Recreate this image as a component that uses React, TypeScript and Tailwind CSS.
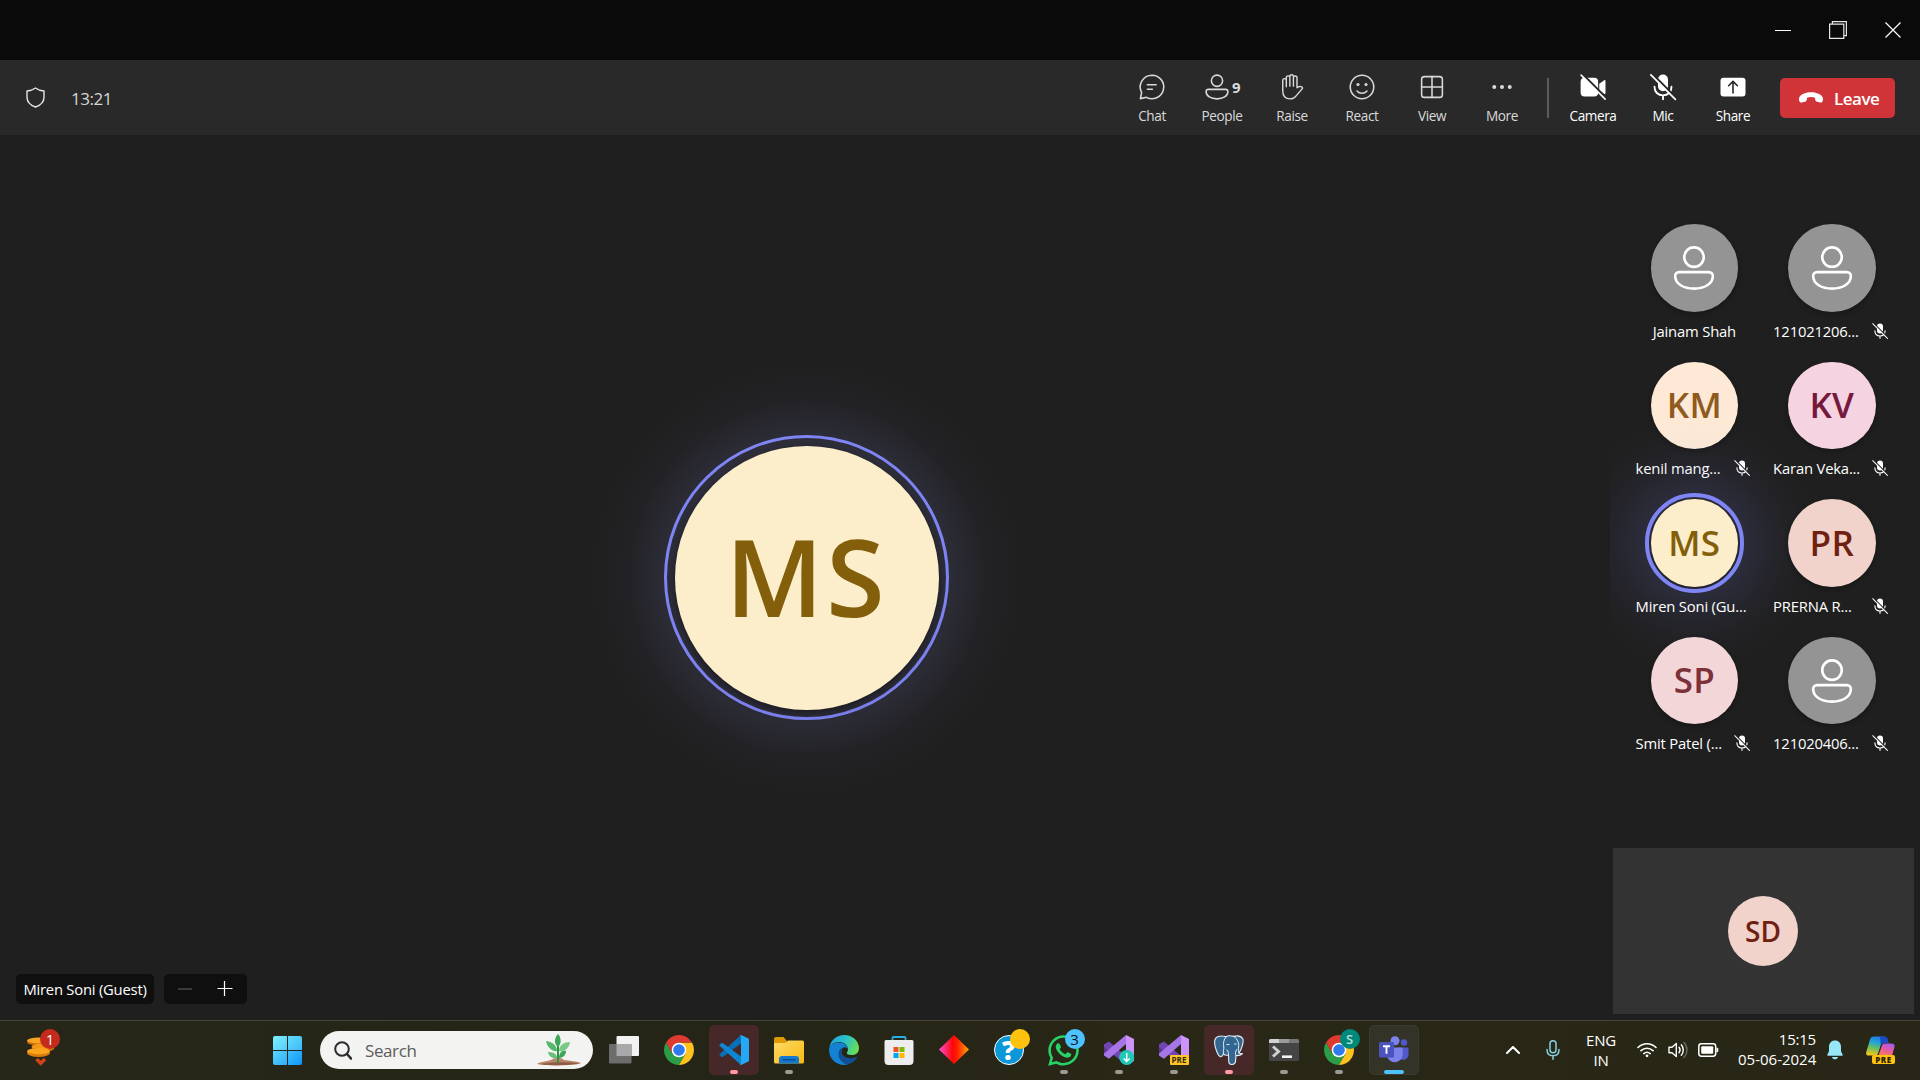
import type { ReactNode } from "react";
import { FaWhatsapp } from "react-icons/fa";

/* ---------- shared icons ---------- */

function Line({ size = 30, stroke = 1.25, children }: { size?: number; stroke?: number; children: ReactNode }) {
  return (
    <svg width={size} height={size} viewBox="0 0 24 24" fill="none" stroke="currentColor" strokeWidth={stroke} strokeLinecap="round" strokeLinejoin="round" className="shrink-0">
      {children}
    </svg>
  );
}

function Person({ size = 30, stroke = 1.25 }: { size?: number; stroke?: number }) {
  return (
    <Line size={size} stroke={stroke}>
      <circle cx="12" cy="7" r="4.5" />
      <path d="M5.1 13.9h13.8a1.8 1.8 0 0 1 1.8 1.8c0 3.6-3.9 5.8-8.7 5.8s-8.7-2.2-8.7-5.8a1.8 1.8 0 0 1 1.8-1.8Z" />
    </Line>
  );
}

function MicOff({ size, bg }: { size: number; bg: string }) {
  return (
    <svg width={size} height={size} viewBox="0 0 24 24" fill="none" strokeLinecap="round" className="shrink-0">
      <rect x="8" y="2" width="8" height="13.4" rx="4" fill="currentColor" />
      <path d="M5.2 11.8c0 4.2 2.8 6.9 6.8 6.9s6.8-2.7 6.8-6.9M12 18.7v3.100" stroke="currentColor" strokeWidth="1.5" />
      <path d="M3.4 1.500 23.100 21.200" stroke={bg} strokeWidth="1.7" />
      <path d="M2.3 2.3 21.9 21.9" stroke="currentColor" strokeWidth="1.4" />
    </svg>
  );
}

/* ---------- meeting toolbar ---------- */

function Tool({ label, bright, children }: { label: string; bright?: boolean; children: ReactNode }) {
  return (
    <div className={`flex w-[70px] flex-col items-center pt-[12px] ${bright ? "text-white" : "text-[#d9d9d9]"}`}>
      <div className="flex h-[30px] items-center justify-center">{children}</div>
      <span className="mt-[4px] text-[13.600px] leading-5 tracking-[-0.400px]">{label}</span>
    </div>
  );
}

function Toolbar() {
  return (
    <div className="flex h-[75px] bg-[#292929]">
      <div className="flex items-center pl-[23px]">
        <svg width="25" height="25" viewBox="0 0 20 20" fill="none" stroke="#e8e8e8" strokeWidth="1.1" strokeLinejoin="round">
          <path d="M10 2.4c2 1.5 4.300 2.200 6.800 2.400v4.700c0 3.900-2.300 6.500-6.800 8.100-4.500-1.600-6.800-4.200-6.800-8.100V4.800C5.700 4.600 8 3.900 10 2.400Z" />
        </svg>
        <span className="ml-[23px] mt-[2px] text-[17px] tracking-[-0.500px] text-[#d6d6d6]">13:21</span>
      </div>
      <div className="ml-auto flex">
        <Tool label="Chat">
          <Line>
            <path d="M12 2.6a9.400 9.400 0 1 1-4.500 17.660L2.700 21.300l1-4.900A9.400 9.400 0 0 1 12 2.600Z" />
            <path d="M8.300 10.200h7M8.300 13.800h4" />
          </Line>
        </Tool>
        <Tool label="People">
          <div className="flex items-center pr-px">
            <Person />
            <span className="w-[9px] text-[15px] font-bold leading-5">9</span>
          </div>
        </Tool>
        <Tool label="Raise">
          <Line stroke={1.15}>
            <path d="M4.600 15V6.700a1.400 1.400 0 0 1 2.850 0V4.500a1.420 1.420 0 0 1 2.850 0V3.600a1.420 1.420 0 0 1 2.850 0v1a1.420 1.420 0 0 1 2.850 0v8c.9-1 2-1.300 3.300-.9 1 .3 1.500 1.100.8 1.800l-5 5.800c-1 1.500-2.300 2.200-4.600 2.200-4 0-5.900-2.300-5.900-6.500ZM7.450 6.700v5.100M10.300 4.500v6.800M13.150 4.600v6.700" />
          </Line>
        </Tool>
        <Tool label="React">
          <Line>
            <circle cx="12" cy="12" r="9.400" />
            <circle cx="8.800" cy="10" r="1.250" fill="currentColor" stroke="none" />
            <circle cx="15.200" cy="10" r="1.250" fill="currentColor" stroke="none" />
            <path d="M8 15.200c2.100 2.400 5.900 2.400 8 0" />
          </Line>
        </Tool>
        <Tool label="View">
          <Line>
            <rect x="3.700" y="3.700" width="16.600" height="16.600" rx="2.200" />
            <path d="M12 3.700v16.600M3.700 12h16.600" />
          </Line>
        </Tool>
        <Tool label="More">
          <svg width="30" height="30" viewBox="0 0 24 24" fill="currentColor">
            <circle cx="5.800" cy="12" r="1.600" />
            <circle cx="12" cy="12" r="1.600" />
            <circle cx="18.200" cy="12" r="1.600" />
          </svg>
        </Tool>
      </div>
      <div className="ml-[10px] mr-[9px] mt-[18px] h-10 w-[2px] bg-[#5c5c5c]" />
      <Tool label="Camera" bright>
        <svg width="30" height="30" viewBox="0 0 24 24" fill="currentColor">
          <rect x="2.100" y="4.500" width="14" height="15" rx="3.200" />
          <path d="M17 9.300 21 6.500c.5-.3 1 0 1 .5v10c0 .6-.5.900-1 .5l-4-2.800Z" />
          <path d="M3.300 1.400 23 21.100" stroke="#292929" strokeWidth="1.700" />
          <path d="M2.500 2.500 21.700 21.700" stroke="currentColor" strokeWidth="1.300" strokeLinecap="round" />
        </svg>
      </Tool>
      <Tool label="Mic" bright>
        <MicOff size={30} bg="#292929" />
      </Tool>
      <Tool label="Share" bright>
        <svg width="30" height="30" viewBox="0 0 24 24" fill="none">
          <rect x="2" y="4.500" width="20" height="15" rx="2.400" fill="currentColor" />
          <path d="M12 16.800V7.800M8.500 11 12 7.500l3.500 3.500" stroke="#292929" strokeWidth="1.300" strokeLinecap="round" strokeLinejoin="round" />
        </svg>
      </Tool>
      <button className="ml-[12px] mr-[25px] mt-[18px] flex h-10 w-[115px] items-center rounded-[5px] bg-[#d13438] pl-[19px] text-white">
        <svg width="24" height="12" viewBox="0 0 24 12" fill="currentColor">
          <path d="M12 .3c5 0 9.300 1.700 11.200 4.300.8 1.200 1 2.700.6 4.200-.3 1.300-1.400 2-2.600 1.700l-3.100-.7c-1-.2-1.700-1-1.900-2l-.3-2.100C14.700 5.200 13.400 5 12 5s-2.700.2-3.900.7l-.3 2.100c-.2 1-.9 1.800-1.900 2l-3.100.7c-1.200.3-2.300-.4-2.600-1.700-.4-1.500-.2-3 .6-4.200C2.700 2 7 .3 12 .3Z" />
        </svg>
        <span className="ml-[11px] mt-px text-[17px] font-semibold tracking-[-0.500px]">Leave</span>
      </button>
    </div>
  );
}

/* ---------- participants ---------- */

type Participant = { name: string; initials?: string; bg: string; fg: string; muted?: boolean; speaking?: boolean };

const participants: Participant[] = [
  { name: "Jainam Shah", bg: "bg-[#949494]", fg: "text-white" },
  { name: "121021206...", bg: "bg-[#949494]", fg: "text-white", muted: true },
  { name: "kenil mang...", initials: "KM", bg: "bg-[#fde9d5]", fg: "text-[#8f5a20]", muted: true },
  { name: "Karan Veka...", initials: "KV", bg: "bg-[#f5d3e0]", fg: "text-[#77193d]", muted: true },
  { name: "Miren Soni (Gu...", initials: "MS", bg: "bg-[#fdeecb]", fg: "text-[#835f0b]", speaking: true },
  { name: "PRERNA R...", initials: "PR", bg: "bg-[#f1d3cc]", fg: "text-[#6e2110]", muted: true },
  { name: "Smit Patel (...", initials: "SP", bg: "bg-[#f3d6d8]", fg: "text-[#7c3038]", muted: true },
  { name: "121020406...", bg: "bg-[#949494]", fg: "text-white", muted: true },
];

function Tile({ p }: { p: Participant }) {
  return (
    <div className="relative h-[137.500px] w-[137.500px]">
      {p.speaking && (
        <div className="pointer-events-none absolute -left-[16px] -top-[83px] h-[254px] w-[211px] overflow-hidden">
          <div className="h-[254px] w-[254px] -translate-x-[43px] bg-[radial-gradient(circle_closest-side,rgba(127,133,245,0.16)_0%,rgba(127,133,245,0.13)_40%,rgba(127,133,245,0.05)_65%,rgba(127,133,245,0.01)_88%,rgba(127,133,245,0)_100%)]" />
        </div>
      )}
      <div className={`relative mx-auto flex h-[87.500px] w-[87.500px] items-center justify-center rounded-full shadow-[0_2px_5px_rgba(0,0,0,0.3)] ${p.bg} ${p.fg}`}>
        {p.initials ? (
          <span className="-mt-[2px] text-[35px] font-semibold leading-none tracking-[0.300px]">{p.initials}</span>
        ) : (
          <Person size={52} stroke={1.200} />
        )}
        {p.speaking && <div className="absolute -inset-[6px] rounded-full border-4 border-[#7f85f5]" />}
      </div>
      <div className={`relative mt-[8px] flex h-[22px] items-center pl-[10px] pr-[12px] text-white ${p.muted || p.speaking ? "justify-between" : "justify-center pl-[12px]"}`}>
        <span className="whitespace-nowrap text-[14.800px] leading-[22px] tracking-[-0.180px]">{p.name}</span>
        {p.muted && <MicOff size={18} bg="#1f1f1f" />}
      </div>
    </div>
  );
}

function Stage() {
  return (
    <div className="flex h-[885px] bg-[#1f1f1f]">
      <div className="relative flex w-[1613px] items-center justify-center">
        <div className="flex h-[430px] w-[430px] items-center justify-center rounded-full bg-[radial-gradient(circle_closest-side,#343444_0%,#31313f_60%,#2a2a33_70%,#232327_82%,#1f1f1f_100%)]">
          <div className="flex h-[285px] w-[285px] items-center justify-center rounded-full border-[3.500px] border-[#7f85f5]">
            <div className="flex h-[264px] w-[264px] items-center justify-center rounded-full bg-[#fdeecb] shadow-[0_3px_8px_rgba(0,0,0,0.5)]">
              <span className="-mt-[4px] text-[106px] font-semibold leading-none tracking-[3px] text-[#835f0b]">MS</span>
            </div>
          </div>
        </div>
        <div className="absolute bottom-[16px] left-[16px] flex h-[30px] gap-[10px]">
          <div className="flex w-[138px] items-center justify-center rounded-[5px] bg-[#0f0f0f] pt-px">
            <span className="whitespace-nowrap text-[14.800px] tracking-[-0.220px] text-white">Miren Soni (Guest)</span>
          </div>
          <div className="flex w-[83px] items-center rounded-[5px] bg-[#0f0f0f] pl-[14px]">
            <div className="h-[2px] w-[14px] bg-[#3a3a3a]" />
            <svg width="16" height="16" viewBox="0 0 16 16" stroke="white" strokeWidth="1.200" className="ml-[25px]">
              <path d="M.5 7.500h15M7.500 0v15" />
            </svg>
          </div>
        </div>
      </div>
      <div className="flex flex-1 flex-col justify-between pb-[6px] pt-[89.400px]">
        <div className="ml-[12.600px] grid w-[275px] grid-cols-2">
          {participants.map((p) => (
            <Tile key={p.name} p={p} />
          ))}
        </div>
        <div className="flex h-[166px] w-[301px] items-center justify-center bg-[#333] pr-px">
          <div className="flex h-[70px] w-[70px] items-center justify-center rounded-full bg-[#f1d3cc]">
            <span className="-mt-px text-[28px] font-semibold leading-none text-[#6e2110]">SD</span>
          </div>
        </div>
      </div>
    </div>
  );
}

/* ---------- taskbar ---------- */

function App30({ children }: { children: ReactNode }) {
  return (
    <svg width="30" height="30" viewBox="0 0 30 30" className="overflow-visible">
      {children}
    </svg>
  );
}

function Slot({ state, children }: { state?: "open" | "alert" | "active"; children: ReactNode }) {
  return (
    <div className="flex w-[55px] justify-center">
      <div
        className={`relative flex h-[50px] w-[50px] items-center justify-center rounded-[5px] ${
          state === "alert" ? "bg-[#472829]" : state === "active" ? "border border-[#3a3a2e] bg-[#333328]" : ""
        }`}
      >
        {children}
        {state === "open" && <div className="absolute bottom-px h-1 w-2 rounded-full bg-[#9b9b93]" />}
        {state === "alert" && <div className="absolute bottom-px h-1 w-2 rounded-full bg-[#ff99a4]" />}
        {state === "active" && <div className="absolute bottom-0 h-1 w-5 rounded-full bg-[#4cc2ff]" />}
      </div>
    </div>
  );
}

function Badge({ tone, children }: { tone: string; children?: ReactNode }) {
  return <div className={`absolute left-[26px] top-[4px] flex h-5 w-5 items-center justify-center rounded-full leading-none ${tone}`}>{children}</div>;
}

function Chrome() {
  return (
    <App30>
      <path d="M2.010 7.500A15 15 0 0 0 15 30l6.500-11.250h-13Z" fill="#2a9d48" />
      <path d="M27.990 7.500A15 15 0 0 1 15 30l6.500-11.250L15 7.500Z" fill="#fcc31e" />
      <path d="M2.010 7.500A15 15 0 0 1 27.990 7.500H15L8.500 18.750Z" fill="#df3a2f" />
      <circle cx="15" cy="15" r="7.300" fill="#fff" />
      <circle cx="15" cy="15" r="5.800" fill="#2f7bee" />
    </App30>
  );
}

function VisualStudio({ children }: { children?: ReactNode }) {
  return (
    <App30>
      <path d="M0 9.500 5 6.500v17.200L0 20.500Z" fill="#5b378f" />
      <path d="M0 9.500 5 6.500 22 21v9L0 12Z" fill="#7146b4" />
      <path d="M0 20.500 5 23.700 22 9V0L0 18.500Z" fill="#a675e6" />
      <path d="M22 0 30 4v22l-8 4Z" fill="#cc93fb" />
      {children}
    </App30>
  );
}

function Elephant() {
  return (
    <App30>
      <g fill="#336791" stroke="#e6edf2" strokeWidth="1.100" strokeLinecap="round" strokeLinejoin="round">
        <path d="M8 1C2 .8.300 4 .6 8c.3 5 3.400 13.200 5.900 13.700 1.500.3 2.500-2.200 3-2.900 1 1.200 3 1.700 5 1.200l.3 7c.2 3.400 6.200 3.400 6.700-.5l.5-6c2.500.3 5-.5 6.500-1.700-1.500-.3-3-.2-3.500-.8 3-4.500 5-12 3.800-14.200C27 1 23 .6 20 1.400 16.500.4 13.500.6 12 1.800 10.500 1.200 9.500 1 8 1Z" />
        <path d="M12 1.800C9.500 4.500 9 9 9.800 12c.2 2.500-1 4-.3 6.800M20 1.400c3.500 2.600 5.500 7.600 4.500 10.600-.3 2.500-.2 4.500.5 6M14.500 20c.3-2-.2-3.500-1.500-5M22 20.500c-1-2-.8-4 .8-6" fill="none" strokeWidth="1" />
        <path d="M13 9.500h2M20.700 9h1.500" strokeWidth="1.200" />
      </g>
    </App30>
  );
}

function Taskbar() {
  return (
    <div className="flex h-[60px] border-t border-[#45453a] bg-[linear-gradient(90deg,#262718,#242517_35%,#292716_60%,#282717)] text-white">
      {/* widgets */}
      <div className="flex w-[259px] items-center pb-[5px] pl-[26px]">
        <div className="relative h-[38px] w-[36px]">
          <svg width="30" height="38" viewBox="0 0 30 38">
            <ellipse cx="12.500" cy="13" rx="11.500" ry="3.600" fill="#c96a07" />
            <ellipse cx="12.500" cy="11.500" rx="11.500" ry="3" fill="#f8a321" />
            <ellipse cx="17" cy="19" rx="11.500" ry="3.800" fill="#cf7409" />
            <ellipse cx="17" cy="17.500" rx="11.500" ry="3" fill="#f39717" />
            <ellipse cx="12.500" cy="24" rx="11.500" ry="4" fill="#d97c0a" />
            <ellipse cx="12.500" cy="22.200" rx="11.500" ry="3" fill="#fba51f" />
            <path d="m10.500 30 4.200 4.200L19 30" fill="none" stroke="#cf4416" strokeWidth="3.600" />
          </svg>
          <div className="absolute left-[14px] top-0 flex h-5 w-5 items-center justify-center rounded-full bg-[#c42b1c] text-[14px]">1</div>
        </div>
      </div>
      {/* start */}
      <div className="flex w-[56px] items-center justify-center">
        <div className="grid h-[29px] w-[29px] grid-cols-2 gap-px overflow-hidden rounded-[2px]">
          <div className="bg-[linear-gradient(135deg,#7df0fd,#56cdfb)]" />
          <div className="bg-[linear-gradient(135deg,#63dcfc,#3db9fb)]" />
          <div className="bg-[linear-gradient(135deg,#5bd6fc,#2fabfa)]" />
          <div className="bg-[linear-gradient(135deg,#41bffb,#0d95fb)]" />
        </div>
      </div>
      {/* search */}
      <div className="ml-[5px] mr-[3px] mt-[10px] flex h-[38px] w-[273px] items-center rounded-full bg-[#f3f3f1] pl-[14px] pr-[10px]">
        <svg width="18" height="19" viewBox="0 0 18 19" fill="none" stroke="#2c2c30" strokeWidth="2" strokeLinecap="round">
          <circle cx="8" cy="8" r="6.800" />
          <path d="m13 13 4 4.500" strokeWidth="2.600" />
        </svg>
        <span className="ml-[13px] mt-px text-[17px] tracking-[-0.400px] text-[#5c5c5c]">Search</span>
        <svg width="46" height="34" viewBox="0 0 46 34" className="ml-auto">
          <path d="M0 31c4-3 9-2 14-4 5-3 9-3 13 0 6 1 12 1 17 3-2 3-40 3-44 1Z" fill="#b98468" />
          <path d="M4 31c10-2 20-2 38-1-6 2.500-34 3-38 1Z" fill="#8e5b44" />
          <path d="M21 30V12" stroke="#2d9448" strokeWidth="2" />
          <path d="M21 14c-5-4-3-10 0-13 3 3 4 9 0 13Z" fill="#3ba858" />
          <path d="M20 18C15 19 10 14 9 8c7 1 11 5 11 10Z" fill="#56b86a" />
          <path d="M22 18c0-5 4-9 11-9-1 6-5 10-11 9Z" fill="#79c987" />
          <path d="M20 25c-4 1-8-1-9-6 5 0 9 2 9 6Z" fill="#67bf79" />
          <path d="M22 25c0-4 2-8 7-7 0 4-3 7-7 7Z" fill="#3da65a" />
        </svg>
      </div>
      {/* pinned and running apps */}
      <div className="flex items-center pb-px">
        <Slot>
          <App30>
            <rect x="7.500" y="1" width="22.500" height="20" rx="1" fill="#f2f2f2" />
            <rect x="0" y="9" width="22.500" height="19.500" rx="1" fill="#6d6d6d" />
            <rect x="7.500" y="9" width="15" height="12" fill="#a9a9a9" />
          </App30>
        </Slot>
        <Slot>
          <Chrome />
        </Slot>
        <Slot state="alert">
          <App30>
            <path d="M.5 19.200 22 0v8.500L4 21.800c-.6.400-1.200.4-1.700-.1L.6 20.200c-.3-.3-.3-.7-.1-1Z" fill="#0870b8" />
            <path d="M.5 10.800 22 30v-8.500L4 8.200c-.6-.4-1.200-.4-1.700.1L.6 9.800c-.3.3-.3.700-.1 1Z" fill="#0e86d4" />
            <path d="M22 0 29 3.200c.7.300 1 .8 1 1.500v20.600c0 .7-.3 1.200-1 1.500L22 30l-1.500-1c.9.5 1.500.3 1.500-.8V1.800c0-1-.6-1.300-1.500-.8Z" fill="#25a8f5" />
          </App30>
        </Slot>
        <Slot state="open">
          <App30>
            <path d="M0 4a2 2 0 0 1 2-2h7.500l3 3.500V9H0Z" fill="#dd9a05" />
            <path d="M0 8h11l3-2.500h14.500A1.500 1.500 0 0 1 30 7v20a1.500 1.500 0 0 1-1.500 1.500h-27A1.500 1.500 0 0 1 0 27Z" fill="url(#folder)" />
            <path d="M5 28.500V24a3 3 0 0 1 3-3h14a3 3 0 0 1 3 3v4.500Z" fill="#1279cf" />
            <path d="M9 24.800h12" stroke="#0a4d95" strokeWidth="1.400" strokeLinecap="round" />
            <defs>
              <linearGradient id="folder" x1="0" y1="0" x2="1" y2="1">
                <stop stopColor="#ffdb68" />
                <stop offset="1" stopColor="#f8b80f" />
              </linearGradient>
            </defs>
          </App30>
        </Slot>
        <Slot>
          <App30>
            <defs>
              <linearGradient id="edgeTop" x1="0" y1="0.300" x2="1" y2="0.600">
                <stop stopColor="#1ea0dd" />
                <stop offset="0.500" stopColor="#2bc3c8" />
                <stop offset="1" stopColor="#6ce050" />
              </linearGradient>
            </defs>
            <path d="M0 15C0 10 5 7.500 9.500 7.500c5.500 0 9.500 3.500 9.500 6.500-1-1.500-3-2-4.500-1.500-3.500 1.500-5.500 4.500-4.500 8.500 1.200 4.500 5 7.500 9 8.200-1.200.6-2.500.8-4 .8C7 30 0 23.500 0 15Z" fill="#1382d3" />
            <path d="M14.500 12.500C8.500 14.500 8.500 23.500 14 27.500c4.500 3.500 10.500.5 14-4.800.3-.8-.6-1-2-.3-6 2.300-13.200-.4-13.200-5.600 0-1.800.5-3.500 1.700-4.300Z" fill="#114f96" />
            <path d="M.2 13C1.500 5 8 0 15 0c9 0 15 6.500 15 13 0 4.500-3 7-7 7-3.500 0-5.500-1-5.200-2.300.3-1 1.400-1.700 1.200-4.200C18.700 9.500 14 6.800 9.500 6.900 5 7 1.500 9.500.2 13Z" fill="url(#edgeTop)" />
          </App30>
        </Slot>
        <Slot>
          <App30>
            <path d="M8.500 6V3A1 1 0 0 1 9.500 2h11A1 1 0 0 1 21.500 3v3" fill="none" stroke="#27ace6" strokeWidth="1.800" />
            <path d="M.5 6.500a1.500 1.500 0 0 1 1.500-1.500h26a1.500 1.500 0 0 1 1.500 1.500V26a4 4 0 0 1-4 4h-21a4 4 0 0 1-4-4Z" fill="#ededed" />
            <path d="M9.500 12h5v5h-5Z" fill="#f25022" />
            <path d="M15.500 12h5v5h-5Z" fill="#7fba00" />
            <path d="M9.500 18h5v5h-5Z" fill="#00a4ef" />
            <path d="M15.500 18h5v5h-5Z" fill="#ffb900" />
          </App30>
        </Slot>
        <Slot>
          <App30>
            <defs>
              <linearGradient id="gem">
                <stop stopColor="#ff4fd8" />
                <stop offset="0.450" stopColor="#fb0808" />
                <stop offset="0.600" stopColor="#ff1c00" />
                <stop offset="1" stopColor="#ffa800" />
              </linearGradient>
            </defs>
            <path d="m15 0 15 14.500L15 29 0 14.500Z" fill="url(#gem)" />
          </App30>
        </Slot>
        <Slot>
          <div className="flex h-[30px] w-[30px] items-center justify-center rounded-full border-[1.500px] border-white bg-[#0c97d8] text-[26px] font-extrabold leading-none">?</div>
          <Badge tone="bg-[#ffc20e]" />
        </Slot>
        <Slot state="open">
          <FaWhatsapp size={35} color="#25d366" />
          <Badge tone="bg-[#4cc2ff] text-[#111] text-[15px]">3</Badge>
        </Slot>
        <Slot state="open">
          <VisualStudio>
            <circle cx="22.700" cy="22.500" r="7.500" fill="#1fc8b4" />
            <path d="M22.700 18v8.500m-3-3 3 3 3-3" fill="none" stroke="#fff" strokeWidth="1.500" />
          </VisualStudio>
        </Slot>
        <Slot state="open">
          <VisualStudio />
          <div className="absolute left-[21px] top-[30px] flex h-[10px] w-[19px] items-center justify-center rounded-[1px] bg-[#ffc426] text-[8px] font-bold leading-none text-[#332b12]">PRE</div>
        </Slot>
        <Slot state="alert">
          <Elephant />
        </Slot>
        <Slot state="open">
          <App30>
            <rect x="0" y="4" width="30" height="22" rx="1.500" fill="#454545" />
            <path d="M0 8V5.500A1.500 1.500 0 0 1 1.500 4H10v4Z" fill="#d2d2d2" />
            <path d="M10 4h10v4H10Z" fill="#9b9b9b" />
            <path d="M20 4h8.500A1.500 1.500 0 0 1 30 5.500V8H20Z" fill="#777" />
            <path d="m4 11.500 5.500 5L4 21.500" fill="none" stroke="#d0d0d0" strokeWidth="3" />
            <path d="M13 21.700h10" stroke="#f2f2f2" strokeWidth="2.600" />
          </App30>
        </Slot>
        <Slot state="open">
          <Chrome />
          <Badge tone="bg-[#00897b] text-[#b9dfda] text-[13px] font-semibold">S</Badge>
        </Slot>
        <Slot state="active">
          <App30>
            <circle cx="25" cy="7.500" r="3.200" fill="#5059c9" />
            <path d="M20 12.500h8.500a1 1 0 0 1 1 1V20a5 5 0 0 1-7 4.500Z" fill="#5059c9" />
            <circle cx="16" cy="5.700" r="4.500" fill="#7b83eb" />
            <path d="M9 12.500h13.500a1.200 1.200 0 0 1 1.200 1.200V20a8 8 0 0 1-15.500 2Z" fill="#7b83eb" />
            <rect x="0" y="7" width="15" height="15.500" rx="1.300" fill="#4b53bc" />
            <path d="M4 11.200h7M7.500 11.200v7.600" stroke="#fff" strokeWidth="1.900" />
          </App30>
        </Slot>
      </div>
      {/* system tray */}
      <div className="ml-auto flex items-center pb-px text-[15px] leading-5">
        <svg width="14" height="8" viewBox="0 0 14 8" fill="none" stroke="white" strokeWidth="2" strokeLinecap="round" strokeLinejoin="round">
          <path d="m1 7 6-6 6 6" />
        </svg>
        <svg width="14" height="20" viewBox="0 0 14 20" fill="none" stroke="#86cfe0" strokeWidth="1.500" strokeLinecap="round" className="ml-[26px]">
          <rect x="4" y=".8" width="6" height="12" rx="3" />
          <path d="M1 9.500c0 4 2.500 6.300 6 6.300s6-2.300 6-6.300M7 16v3.300" />
        </svg>
        <div className="ml-[26px] w-[30px] text-center tracking-[-0.200px]">
          <div>ENG</div>
          <div>IN</div>
        </div>
        <svg width="20" height="16" viewBox="0 0 20 16" fill="none" stroke="white" strokeWidth="1.600" strokeLinecap="round" className="ml-[21px]">
          <path d="M1 5.500c5-5 13-5 18 0M4 8.700c3.500-3.300 8.500-3.300 12 0M6.800 11.600c2-1.700 4.400-1.700 6.400 0" />
          <circle cx="10" cy="13.800" r="1.400" fill="white" stroke="none" />
        </svg>
        <svg width="21" height="18" viewBox="0 0 21 18" fill="none" stroke="white" strokeWidth="1.400" strokeLinecap="round" strokeLinejoin="round" className="ml-[11px]">
          <path d="M1 6.200h3L8.300 2.500v13L4 11.800H1ZM11 6.300c1.300 1.600 1.300 3.800 0 5.400M13.300 3.800c2.600 3 2.600 7.400 0 10.400" />
          <path d="M16 1.500c4 4.300 4 10.700 0 15" stroke="#6b6b60" />
        </svg>
        <svg width="21" height="14" viewBox="0 0 21 14" fill="none" className="ml-[9px]">
          <rect x=".8" y=".8" width="16.900" height="12.400" rx="2.600" stroke="white" strokeWidth="1.500" />
          <rect x="3.200" y="3.200" width="12" height="7.600" rx="1" fill="white" />
          <path d="M18.500 4.700h.5a1.300 1.300 0 0 1 1.300 1.300v2a1.300 1.300 0 0 1-1.300 1.300h-.5Z" fill="white" />
        </svg>
        <div className="-mt-[2px] ml-[19px] w-[78px] whitespace-nowrap text-right">
          <div className="tracking-[-0.200px]">15:15</div>
          <div>05-06-2024</div>
        </div>
        <svg width="16" height="20" viewBox="0 0 16 20" fill="#98e6fa" className="ml-[11px]">
          <path d="M8 .5c3.600 0 6 2.600 6 6.200v4.500l1.700 3.600c.2.500 0 .9-.6.900H.9c-.6 0-.8-.4-.6-.9L2 11.200V6.700C2 3.100 4.400.5 8 .5ZM5 17h6c-.4 1.500-1.500 2.300-3 2.300S5.400 18.500 5 17Z" />
        </svg>
        <div className="relative ml-[23px] mr-[25px] h-[30px] w-[29px]">
          <svg width="29" height="30" viewBox="0 0 29 30">
            <defs>
              <linearGradient id="copilotA" x1="0.600" y1="0" x2="0.300" y2="1">
                <stop stopColor="#1c78df" />
                <stop offset="0.350" stopColor="#23a4d8" />
                <stop offset="0.600" stopColor="#63bd69" />
                <stop offset="1" stopColor="#f4c618" />
              </linearGradient>
              <linearGradient id="copilotB" x1="0.700" y1="0" x2="0.300" y2="1">
                <stop stopColor="#a45bea" />
                <stop offset="0.500" stopColor="#e35aa5" />
                <stop offset="1" stopColor="#fb7b57" />
              </linearGradient>
            </defs>
            <path d="M8 1.500h10c2 0 3 1.200 3.600 3L22.500 8H18c-2 0-3 1-3.600 3l-2 6.500C11.800 19.500 11 20.500 9 20.500H2.500C.5 20.500-.2 19 .3 17L4 4.500C4.700 2.500 6 1.500 8 1.500Z" fill="url(#copilotA)" />
            <path d="M14 1.500h4c2 0 3 1.200 3.600 3L22.500 8H18c-1.500 0-2.500.6-3.200 2Z" fill="#1b49c8" />
            <path d="M19 8.500h6.500c2.400 0 3.500 1.500 3 3.500L26 20.500H12.500L15.800 11c.6-1.700 1.500-2.500 3.200-2.500Z" fill="url(#copilotB)" />
          </svg>
          <div className="absolute left-[6px] top-[20px] flex h-[9px] w-[23px] items-center justify-center rounded-[2px] bg-[#ffc20e] text-[8px] font-extrabold leading-none tracking-[0.600px] text-[#2a2208]">PRE</div>
        </div>
      </div>
    </div>
  );
}

export default function App() {
  return (
    <div className="h-[1080px] w-[1920px] overflow-hidden bg-[#1f1f1f] font-['Open_Sans','Noto_Sans',sans-serif]">
      <div className="flex h-[60px] items-center justify-end bg-[#0a0a0a] pr-[18px]">
        <div className="mr-[38px] h-px w-4 bg-white" />
        <svg width="18" height="18" viewBox="0 0 18 18" fill="none" stroke="#e6e6e6" strokeWidth="1.200" className="mr-[37px]">
          <path d="M.6 3.200h14.200v14.200H.6ZM3.400 3V.6h14v14h-2.400" />
        </svg>
        <svg width="18" height="18" viewBox="0 0 18 18" stroke="white" strokeWidth="1.200">
          <path d="m1.500 1.500 15 15M16.500 1.500l-15 15" />
        </svg>
      </div>
      <Toolbar />
      <Stage />
      <Taskbar />
    </div>
  );
}
